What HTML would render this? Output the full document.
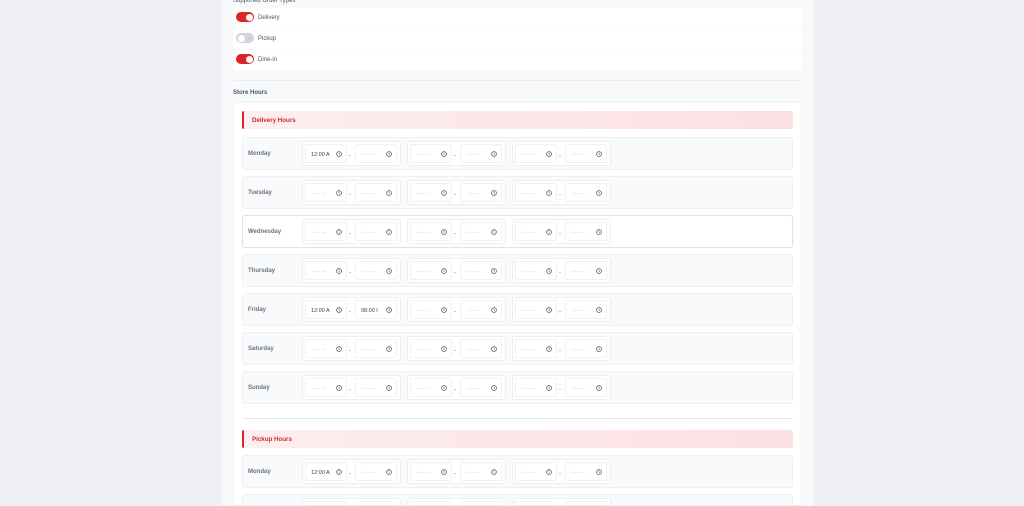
<!DOCTYPE html>
<html><head><meta charset="utf-8"><style>
*{box-sizing:border-box;margin:0;padding:0}
html,body{width:1024px;height:506px;overflow:hidden}
body{background:#eff0f3;font-family:"Liberation Sans",sans-serif;position:relative}
.panel{position:absolute;left:222px;top:0;width:591px;height:506px;background:#f8f9fb}
.abs{position:absolute}
.t{font-size:6px;color:#4b5563}
.trow{position:absolute;left:233px;width:569px;height:20px;background:#fff;border-radius:3px}
.tog{position:absolute;left:3px;top:4px;width:18px;height:10px;border-radius:5px;background:#dc2626}
.tog::after{content:"";position:absolute;right:1.5px;top:1.5px;width:7px;height:7px;border-radius:50%;background:#fff}
.tog.off{background:#d1d5db}
.tog.off::after{right:auto;left:1.5px}
.tl{position:absolute;left:25px;top:7px;font-size:6px;color:#4b5563}
.card{position:absolute;left:233px;top:102px;width:569px;height:404px;background:#fff;border:1px solid #f1f2f4;border-radius:3px}
.hdr{position:absolute;left:242px;width:551px;height:18px;background:linear-gradient(90deg,#fdeef0,#fbe0e3);border-left:2px solid #dc2626;border-radius:2px}
.hdr span{position:absolute;left:8px;top:6px;font-size:6.2px;font-weight:bold;color:#d02a2a}
.row{position:absolute;left:242px;width:551px;height:33px;background:#f9fafb;border:1px solid #eef0f2;border-radius:3px;overflow:hidden}
.row.w{background:#fff;border-color:#dfe1e4}
.day{position:absolute;left:5px;top:13px;font-size:6px;font-weight:bold;color:#6b7280}
.g{position:absolute;top:3px;width:99px;height:25px;background:#fff;border:1px solid #eceef1;border-radius:3px}
.in{position:absolute;top:2px;height:19px;border:1px solid #f0f1f3;border-radius:2px;background:#fff;font-size:5.5px;color:#c3c7cd;padding:7px 0 0 5px}
.in.v{color:#374151}
.in svg{position:absolute;right:4px;top:6px}
.d{position:absolute;left:46px;top:11px;font-size:6px;color:#6b7280}
</style></head><body>
<div class="panel"></div>
<div class="abs t" style="left:233px;top:-2px">Supported Order Types</div>
<div class="trow" style="top:8px"><div class="tog"></div><div class="tl">Delivery</div></div>
<div class="trow" style="top:29px"><div class="tog off"></div><div class="tl">Pickup</div></div>
<div class="trow" style="top:50px"><div class="tog"></div><div class="tl">Dine-in</div></div>
<div class="abs" style="left:233px;top:80px;width:569px;height:1px;background:#eceef1"></div>
<div class="abs t" style="left:233px;top:90px;font-weight:bold;color:#4b5563">Store Hours</div>
<div class="card"></div>
<div class="hdr" style="top:111px"><span>Delivery Hours</span></div>
<div class="abs" style="left:242px;top:418px;width:551px;height:1px;background:#e5e7eb"></div>
<div class="hdr" style="top:430px"><span>Pickup Hours</span></div>
<div id="rows"></div>
<script>
var clk='<svg width="6" height="6" viewBox="0 0 10 10"><circle cx="5" cy="5" r="4" fill="none" stroke="#555" stroke-width="1.2"/><path d="M5 2.5V5L6.5 6" fill="none" stroke="#555" stroke-width="1"/></svg>';
function inp(l,w,v){return '<div class="in'+(v?' v':'')+'" style="left:'+l+'px;width:'+w+'px">'+(v||'--:-- --')+clk+'</div>';}
function row(y,day,a,b,w,h2){var h='<div class="row'+(w?' w':'')+'" style="top:'+y+'px'+(h2?';height:'+h2+'px':'')+'"><div class="day">'+day+'</div>';
[59,164,269].forEach(function(x,i){h+='<div class="g" style="left:'+x+'px">'+inp(2,42,i==0?a:'')+'<div class="d">-</div>'+inp(52,42,i==0?b:'')+'</div>';});
return h+'</div>';}
var d=["Monday","Tuesday","Wednesday","Thursday","Friday","Saturday","Sunday"],s='';
d.forEach(function(n,i){s+=row(137+39*i,n,i==0||i==4?'12:00 A':'',i==4?'08:00 I':'',i==2);});
s+=row(455,'Monday','12:00 A','',false);s+=row(494,'Tuesday','','',false,12);
document.getElementById('rows').innerHTML=s;
</script>
</body></html>
